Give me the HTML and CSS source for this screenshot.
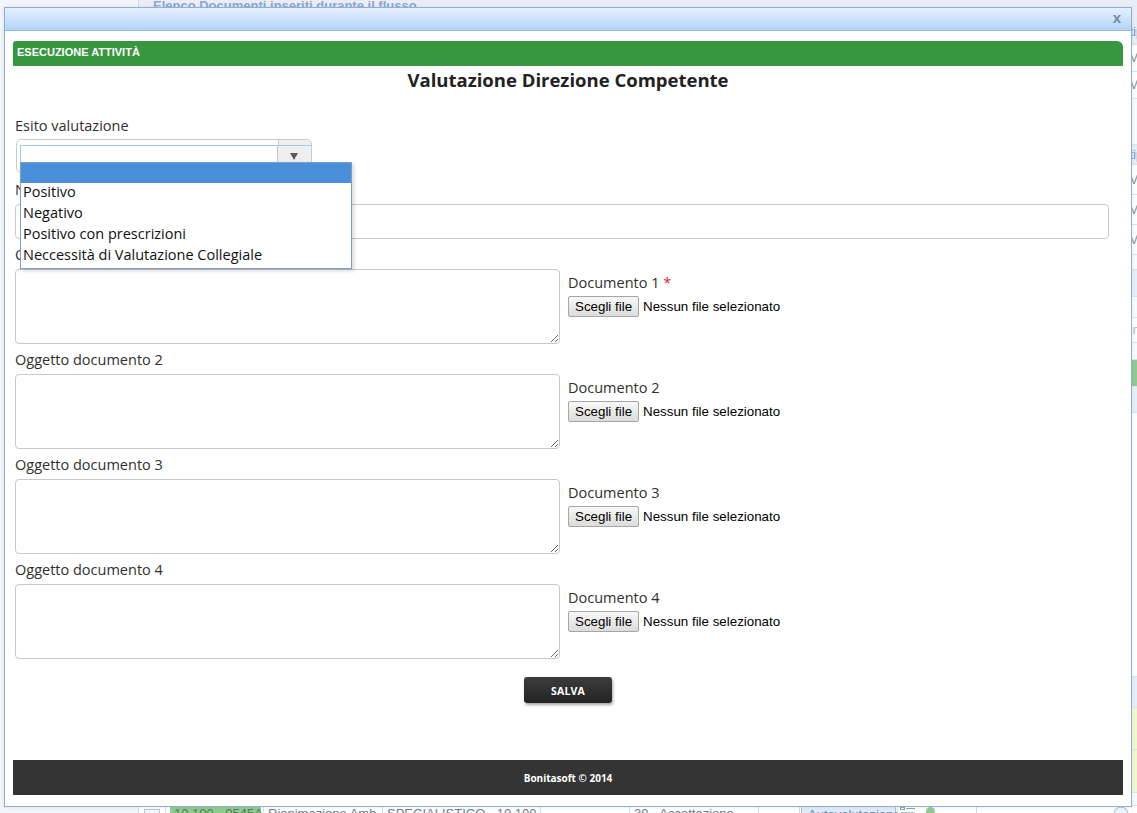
FILE: index.html
```html
<!DOCTYPE html>
<html lang="it">
<head>
<meta charset="utf-8">
<title>Valutazione Direzione Competente</title>
<link rel="stylesheet" href="styles.css">
</head>
<body>
<div class="page">
  <aside class="sidebar"></aside>
  <main class="main">
    <h2 class="main-title">Elenco Documenti inseriti durante il flusso</h2>
    <div class="grid">
      <div class="row row-head"><span class="row-end">tipo</span></div>
      <div class="row row-item row-27"><span class="row-end">V01</span></div>
      <div class="row row-item row-27"><span class="row-end">V01</span></div>
      <div class="row row-blank row-46"></div>
      <div class="row row-head row-20"><span class="row-end">tipo</span></div>
      <div class="row row-item"><span class="row-end">V02</span></div>
      <div class="row row-item"><span class="row-end">V02</span></div>
      <div class="row row-item"><span class="row-end">V03</span></div>
      <div class="row row-blank row-15"></div>
      <div class="row row-band row-27"></div>
      <div class="row row-blank row-21"></div>
      <div class="row row-item row-25"><span class="row-end row-muted">info</span></div>
      <div class="row row-blank row-17"></div>
      <div class="row row-green row-27"></div>
      <div class="row row-band row-26"></div>
      <div class="row row-fill"></div>
      <div class="row row-band row-31"></div>
      <div class="row row-note row-42"></div>
      <div class="row row-note row-43"></div>
      <div class="row row-blank row-13"></div>
      <div class="row-bottom">
        <div class="cell cell-check"><span class="doc-icon"></span></div>
        <div class="cell cell-code"><span class="code-badge">10.100 - 0545A</span></div>
        <div class="cell cell-desc">Rianimazione Amb.</div>
        <div class="cell cell-spec">SPECIALISTICO - 10.100</div>
        <div class="cell cell-empty"></div>
        <div class="cell cell-stage">30 - Accettazione</div>
        <div class="cell cell-gap"></div>
        <div class="cell cell-tag"><span class="tag">Autovalutazione</span></div>
        <div class="cell cell-icons">
          <svg class="list-icon" width="16" height="10" viewBox="0 0 16 10"><rect x="0.5" y="0.5" width="4" height="2" fill="none" stroke="#7bb37b"/><line x1="6" y1="1.5" x2="15" y2="1.5" stroke="#7bb37b"/><line x1="1" y1="5.5" x2="15" y2="5.5" stroke="#b8c4d4"/></svg>
          <span class="dot"></span>
        </div>
        <div class="cell cell-rest">
          <svg class="round-icon" width="16" height="16" viewBox="0 0 16 16"><circle cx="8" cy="8" r="7" fill="#eef3fa" stroke="#9db5d5"/></svg>
        </div>
      </div>
    </div>
  </main>
</div>

<div class="dialog" role="dialog">
  <div class="dialog-bar"><button class="dialog-close" type="button">x</button></div>
  <div class="dialog-body">
    <div class="task-bar">ESECUZIONE ATTIVITÀ</div>
    <h1 class="form-title">Valutazione Direzione Competente</h1>
    <form class="form">
      <div class="field field-select">
        <label class="label label-tight">Esito valutazione</label>
        <div class="select-wrap">
          <div class="select">
            <span class="select-value"></span>
            <span class="select-arrow"><svg width="8" height="7" viewBox="0 0 8 7"><polygon points="0,0 8,0 4,7" fill="#595959"/></svg></span>
          </div>
          <ul class="select-list">
            <li class="is-active"></li>
            <li>Positivo</li>
            <li>Negativo</li>
            <li>Positivo con prescrizioni</li>
            <li>Neccessità di Valutazione Collegiale</li>
          </ul>
        </div>
      </div>

      <div class="field field-note">
        <label class="label">Note</label>
        <input class="text-input" type="text">
      </div>

      <div class="doc-row">
        <div class="doc-main">
          <label class="label">Oggetto documento 1</label>
          <textarea class="text-area"></textarea>
        </div>
        <div class="doc-file">
          <span class="label label-file">Documento 1 <span class="req">*</span></span>
          <div class="file"><span class="file-btn">Scegli file</span><span class="file-name">Nessun file selezionato</span></div>
        </div>
      </div>

      <div class="doc-row">
        <div class="doc-main">
          <label class="label">Oggetto documento 2</label>
          <textarea class="text-area"></textarea>
        </div>
        <div class="doc-file">
          <span class="label label-file">Documento 2</span>
          <div class="file"><span class="file-btn">Scegli file</span><span class="file-name">Nessun file selezionato</span></div>
        </div>
      </div>

      <div class="doc-row">
        <div class="doc-main">
          <label class="label">Oggetto documento 3</label>
          <textarea class="text-area"></textarea>
        </div>
        <div class="doc-file">
          <span class="label label-file">Documento 3</span>
          <div class="file"><span class="file-btn">Scegli file</span><span class="file-name">Nessun file selezionato</span></div>
        </div>
      </div>

      <div class="doc-row doc-row-last">
        <div class="doc-main">
          <label class="label">Oggetto documento 4</label>
          <textarea class="text-area"></textarea>
        </div>
        <div class="doc-file">
          <span class="label label-file">Documento 4</span>
          <div class="file"><span class="file-btn">Scegli file</span><span class="file-name">Nessun file selezionato</span></div>
        </div>
      </div>

      <div class="actions"><button class="btn-save" type="button">SALVA</button></div>
    </form>
    <footer class="dialog-footer">Bonitasoft © 2014</footer>
  </div>
</div>
</body>
</html>
```

FILE: styles.css
```css
html, body {
  margin: 0;
  padding: 0;
  height: 100%;
  overflow: hidden;
}

body {
  position: relative;
  background: #fff;
  color: #333;
  font-family: "Open Sans", "Liberation Sans", sans-serif;
}

/* ---------- page behind the dialog ---------- */
.page {
  display: flex;
  height: 813px;
  overflow: hidden;
}

.sidebar {
  flex: 0 0 138px;
  background: #f3f5f8;
  border-right: 1px solid #d4dae3;
}

.main {
  flex: 1;
  min-width: 0;
  display: flex;
  flex-direction: column;
}

.main-title {
  margin: 0;
  height: 20px;
  flex: 0 0 20px;
  padding-left: 14px;
  background: #e9eef6;
  color: #8ea8cc;
  font: bold 13px/12px "Liberation Sans", Arial, sans-serif;
  white-space: nowrap;
}

.grid {
  display: flex;
  flex-direction: column;
}

.row {
  box-sizing: border-box;
  display: grid;
  grid-template-columns: 1fr 8px;
  align-items: center;
  height: 30px;
  flex: 0 0 auto;
  border-bottom: 1px solid #dde3ec;
  background: #fff;
}

.row-end {
  grid-column: 2;
  padding-left: 1px;
  white-space: nowrap;
  font: 12px "Liberation Sans", Arial, sans-serif;
  color: #8a8f96;
}

.row-head { height: 25px; background: #e6edf7; }
.row-head .row-end { color: #6f93c6; }
.row-blank { background: #f8fafc; }
.row-band { background: #e6eef9; }
.row-green { background: #8fca8f; }
.row-note { background: #f3f7cc; }
.row-fill { height: 264px; }
.row-muted { color: #a8b4c4; }

.row-13 { height: 13px; }
.row-15 { height: 15px; }
.row-17 { height: 17px; }
.row-20 { height: 20px; }
.row-21 { height: 21px; }
.row-25 { height: 25px; }
.row-26 { height: 26px; }
.row-27 { height: 27px; }
.row-31 { height: 31px; }
.row-42 { height: 42px; }
.row-43 { height: 43px; }
.row-46 { height: 46px; }

.row-bottom {
  display: flex;
  height: 26px;
  flex: 0 0 26px;
  background: #fff;
  font: 13px/16px "Liberation Sans", Arial, sans-serif;
  color: #7a7a7a;
}

.cell {
  box-sizing: border-box;
  border-right: 1px solid #d5dce6;
  padding: 0 4px;
  white-space: nowrap;
  overflow: hidden;
}

.cell-check { flex: 0 0 27px; padding: 3px 0 0 5px; }
.cell-code { flex: 0 0 98px; padding: 0 2px 0 4px; }
.cell-desc { flex: 0 0 119px; }
.cell-spec { flex: 0 0 158px; }
.cell-empty { flex: 0 0 89px; }
.cell-stage { flex: 0 0 129px; }
.cell-gap { flex: 0 0 41px; }
.cell-tag { flex: 0 0 98px; padding: 0 1px; }
.cell-icons { flex: 0 0 79px; display: flex; align-items: flex-start; gap: 10px; padding: 1px 2px; }
.cell-rest { flex: 1; border-right: 0; padding: 0 0 0 136px; }

.doc-icon {
  display: block;
  width: 14px;
  height: 12px;
  border: 1px solid #b9c2cf;
  background: #f4f6f9;
}

.code-badge {
  display: block;
  height: 26px;
  padding: 0 4px;
  background: #8fca8f;
  color: #4f7f4f;
}

.tag {
  display: block;
  height: 22px;
  padding: 0 6px;
  border: 1px solid #a9bedb;
  background: #e1eaf7;
  color: #6b86ab;
}

.dot {
  display: block;
  width: 9px;
  height: 9px;
  border-radius: 50%;
  background: #8fc98f;
}

/* ---------- dialog ---------- */
.dialog {
  position: absolute;
  left: 4px;
  top: 7px;
  width: 1128px;
  height: 800px;
  box-sizing: border-box;
  display: flex;
  flex-direction: column;
  border: 1px solid #8eafd6;
  background: #fff;
  box-shadow: 0 0 3px rgba(80, 110, 150, 0.15);
}

.dialog-bar {
  box-sizing: border-box;
  height: 23px;
  flex: 0 0 23px;
  display: flex;
  justify-content: flex-end;
  align-items: flex-start;
  padding: 2px 10px 0 0;
  border-bottom: 1px solid #97b9df;
  background: linear-gradient(#e6f0fd, #b2d5fa);
}

.dialog-close {
  border: 0;
  padding: 0;
  background: none;
  color: #7688a1;
  font: bold 15px/16px "Liberation Sans", Arial, sans-serif;
  cursor: pointer;
}

.dialog-body {
  flex: 1;
  display: flex;
  flex-direction: column;
  padding: 10px 8px 11px;
}

.task-bar {
  height: 25px;
  flex: 0 0 25px;
  box-sizing: border-box;
  padding-left: 4px;
  border-radius: 3px 6px 0 0;
  background: #37963f;
  color: #fff;
  font: bold 11px/23px "Liberation Sans", Arial, sans-serif;
}

.form-title {
  margin: 0;
  text-align: center;
  color: #222;
  font: 700 18.5px/27px "Open Sans", sans-serif;
}

.form {
  display: flex;
  flex-direction: column;
  padding: 23px 2px 0;
}

.label {
  display: block;
  margin-bottom: 4px;
  color: #2f2f2f;
  font: 500 14.5px/20px "Open Sans", sans-serif;
}

.label-tight { margin-bottom: 3px; }
.label-file { margin-bottom: 3px; }

.req { color: #d9262f; }

.field-select { margin-bottom: 7px; }
.field-note { margin-bottom: 6px; }

/* custom select, shown open */
.select-wrap {
  position: relative;
  box-sizing: border-box;
  width: 296px;
  height: 34px;
  margin-left: 1px;
  padding: 5px 0 0 3px;
  border: 1px solid #cbcbcb;
  border-radius: 5px;
  background: linear-gradient(to right, #fff 261px, #c6c6c6 261px, #c6c6c6 262px, #efefef 262px);
}

.select {
  box-sizing: border-box;
  display: flex;
  width: 291px;
  height: 23px;
  border: 1px solid #a3c5ee;
  border-right: 0;
}

.select-value {
  flex: 1;
  background: #fff;
}

.select-arrow {
  flex: 0 0 32px;
  display: flex;
  align-items: center;
  justify-content: center;
  padding: 0 1px 1px 0;
  border-left: 1px solid #c6c6c6;
  background: #efefef;
}

.select-list {
  position: absolute;
  left: 3px;
  top: 22px;
  z-index: 2;
  box-sizing: border-box;
  width: 332px;
  height: 107px;
  margin: 0;
  padding: 0;
  list-style: none;
  border: 1px solid #7f9fc9;
  background: #fff;
  box-shadow: 2px 2px 4px rgba(0, 0, 0, 0.16);
}

.select-list li {
  height: 21px;
  padding-left: 2px;
  color: #111;
  font: 500 14.5px/18px "Open Sans", sans-serif;
  white-space: nowrap;
}

.select-list li.is-active {
  height: 20px;
  background: #4a8fd9;
}

.text-input {
  display: block;
  box-sizing: border-box;
  width: 1094px;
  height: 35px;
  margin: 0;
  padding: 4px 8px;
  border: 1px solid #cacaca;
  border-radius: 4px;
  font: 14px "Open Sans", sans-serif;
}

.doc-row {
  display: grid;
  grid-template-columns: 545px 1fr;
  column-gap: 8px;
  margin-bottom: 6px;
}

.doc-row-last { margin-bottom: 0; }

.text-area {
  display: block;
  box-sizing: border-box;
  width: 545px;
  height: 75px;
  margin: 0;
  padding: 4px 6px;
  border: 1px solid #c8c8c8;
  border-radius: 4px;
  font: 14px "Open Sans", sans-serif;
  resize: vertical;
}

.doc-file { padding-top: 28px; }

.file {
  display: flex;
  align-items: center;
  height: 21px;
}

.file-btn {
  box-sizing: border-box;
  height: 21px;
  padding: 0 6px;
  border: 1px solid #a6a6a6;
  border-radius: 2px;
  background: linear-gradient(#f8f8f8, #dcdcdc);
  color: #000;
  font: 13.33px/19px "Liberation Sans", Arial, sans-serif;
}

.file-name {
  margin-left: 4px;
  color: #000;
  font: 13.33px/19px "Liberation Sans", Arial, sans-serif;
}

.actions {
  display: flex;
  justify-content: center;
  margin-top: 18px;
}

.btn-save {
  width: 88px;
  height: 26px;
  border: 0;
  border-radius: 3px;
  background: linear-gradient(#3d3d3d, #222);
  box-shadow: 1px 2px 3px rgba(0, 0, 0, 0.35);
  color: #fff;
  font: 700 10.5px/26px "Open Sans", sans-serif;
  letter-spacing: 0.2px;
  cursor: pointer;
}

.dialog-footer {
  margin-top: auto;
  height: 35px;
  flex: 0 0 35px;
  background: #333433;
  color: #fff;
  text-align: center;
  font: 700 10px/37px "Open Sans", sans-serif;
}
```
